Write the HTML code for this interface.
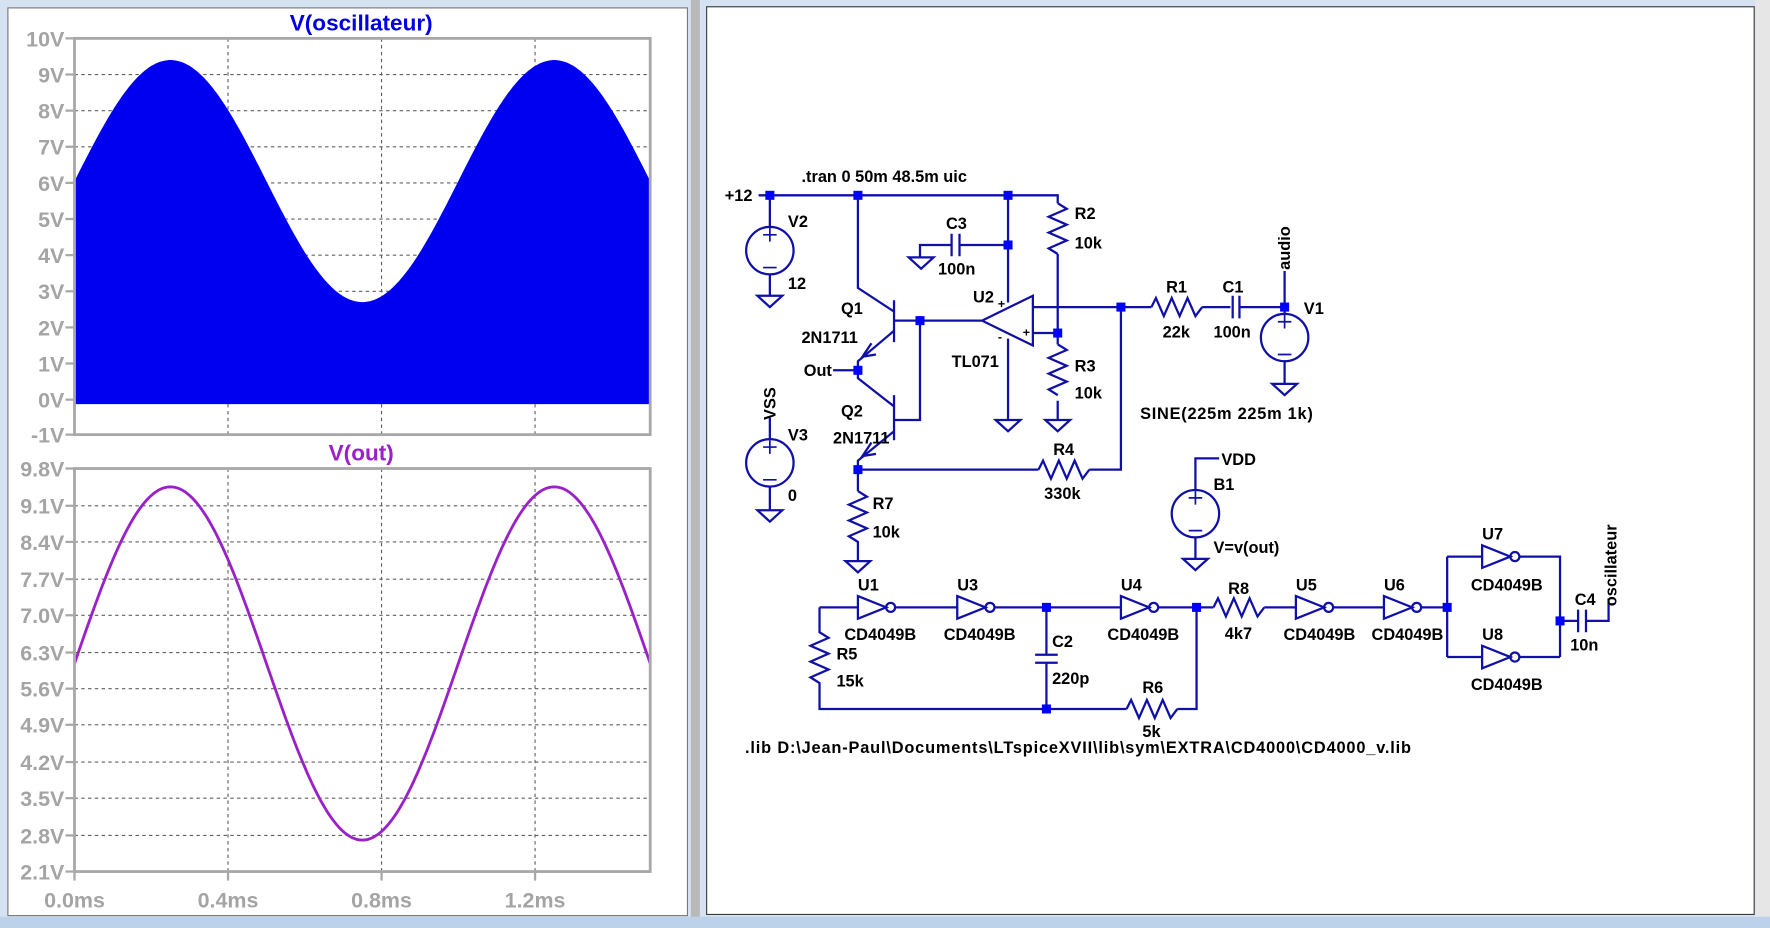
<!DOCTYPE html>
<html><head><meta charset="utf-8"><style>
html,body{margin:0;padding:0;width:1770px;height:928px;overflow:hidden;background:#d5e2f1}
svg{display:block}
.t{font-family:"Liberation Sans",Tahoma,sans-serif;font-weight:bold;font-size:14.5px;fill:#000}
.ax{font-family:"Liberation Sans",Tahoma,sans-serif;font-weight:bold;font-size:19px;fill:#a4a4a4}
.w{stroke:#1010a8;stroke-width:2;fill:none}
.j{fill:#0000ff}
</style></head><body>
<svg width="1770" height="928" viewBox="0 0 1568 822" preserveAspectRatio="none" xmlns="http://www.w3.org/2000/svg">
<rect x="0" y="0" width="1568" height="822" fill="#d5e2f1"/>
<rect x="612" y="0" width="8" height="822" fill="#b9b9b9"/>
<rect x="1555" y="0" width="13" height="822" fill="#e6e6e6"/>
<rect x="7" y="7" width="602" height="804" fill="#fff" stroke="#7a7a7a"/>
<rect x="626" y="6" width="928" height="804" fill="#fff" stroke="#3a3a3a"/>
<rect x="0" y="812" width="1568" height="10" fill="#bcd2ea"/>
<g stroke="#606060" stroke-width="1" stroke-dasharray="3,3">
<line x1="66" y1="66" x2="576" y2="66"/><line x1="66" y1="98" x2="576" y2="98"/><line x1="66" y1="130" x2="576" y2="130"/><line x1="66" y1="162" x2="576" y2="162"/><line x1="66" y1="194" x2="576" y2="194"/><line x1="66" y1="226" x2="576" y2="226"/><line x1="66" y1="258" x2="576" y2="258"/><line x1="66" y1="290" x2="576" y2="290"/><line x1="66" y1="322" x2="576" y2="322"/><line x1="66" y1="354" x2="576" y2="354"/>
<line x1="202" y1="34" x2="202" y2="385"/><line x1="338" y1="34" x2="338" y2="385"/><line x1="474" y1="34" x2="474" y2="385"/>
<line x1="66" y1="448" x2="576" y2="448"/><line x1="66" y1="480" x2="576" y2="480"/><line x1="66" y1="513" x2="576" y2="513"/><line x1="66" y1="545" x2="576" y2="545"/><line x1="66" y1="578" x2="576" y2="578"/><line x1="66" y1="610" x2="576" y2="610"/><line x1="66" y1="642" x2="576" y2="642"/><line x1="66" y1="675" x2="576" y2="675"/><line x1="66" y1="707" x2="576" y2="707"/><line x1="66" y1="740" x2="576" y2="740"/>
<line x1="202" y1="415" x2="202" y2="772"/><line x1="338" y1="415" x2="338" y2="772"/><line x1="474" y1="415" x2="474" y2="772"/>
</g>
<path id="p1" fill="#0000f0" d=""/>
<path id="p2" fill="none" stroke="#9a20c8" stroke-width="2.5" d=""/>
<rect x="66" y="34" width="510" height="351" fill="none" stroke="#a8a8a8" stroke-width="2.5"/>
<rect x="66" y="415" width="510" height="357" fill="none" stroke="#a8a8a8" stroke-width="2.5"/>
<g stroke="#a8a8a8" stroke-width="2">
<line x1="58" y1="34" x2="66" y2="34"/><line x1="58" y1="66" x2="66" y2="66"/><line x1="58" y1="98" x2="66" y2="98"/><line x1="58" y1="130" x2="66" y2="130"/><line x1="58" y1="162" x2="66" y2="162"/><line x1="58" y1="194" x2="66" y2="194"/><line x1="58" y1="226" x2="66" y2="226"/><line x1="58" y1="258" x2="66" y2="258"/><line x1="58" y1="290" x2="66" y2="290"/><line x1="58" y1="322" x2="66" y2="322"/><line x1="58" y1="354" x2="66" y2="354"/><line x1="58" y1="385" x2="66" y2="385"/>
<line x1="58" y1="415" x2="66" y2="415"/><line x1="58" y1="448" x2="66" y2="448"/><line x1="58" y1="480" x2="66" y2="480"/><line x1="58" y1="513" x2="66" y2="513"/><line x1="58" y1="545" x2="66" y2="545"/><line x1="58" y1="578" x2="66" y2="578"/><line x1="58" y1="610" x2="66" y2="610"/><line x1="58" y1="642" x2="66" y2="642"/><line x1="58" y1="675" x2="66" y2="675"/><line x1="58" y1="707" x2="66" y2="707"/><line x1="58" y1="740" x2="66" y2="740"/><line x1="58" y1="772" x2="66" y2="772"/>
<line x1="66" y1="772" x2="66" y2="780"/><line x1="202" y1="772" x2="202" y2="780"/><line x1="338" y1="772" x2="338" y2="780"/><line x1="474" y1="772" x2="474" y2="780"/>
</g>
<g class="ax" text-anchor="end">
<text x="57" y="41">10V</text><text x="57" y="73">9V</text><text x="57" y="105">8V</text><text x="57" y="137">7V</text><text x="57" y="169">6V</text><text x="57" y="201">5V</text><text x="57" y="233">4V</text><text x="57" y="265">3V</text><text x="57" y="297">2V</text><text x="57" y="329">1V</text><text x="57" y="361">0V</text><text x="57" y="392">-1V</text>
<text x="57" y="422">9.8V</text><text x="57" y="455">9.1V</text><text x="57" y="487">8.4V</text><text x="57" y="520">7.7V</text><text x="57" y="552">7.0V</text><text x="57" y="585">6.3V</text><text x="57" y="617">5.6V</text><text x="57" y="649">4.9V</text><text x="57" y="682">4.2V</text><text x="57" y="714">3.5V</text><text x="57" y="747">2.8V</text><text x="57" y="779">2.1V</text>
</g>
<g class="ax" text-anchor="middle">
<text x="66" y="804">0.0ms</text><text x="202" y="804">0.4ms</text><text x="338" y="804">0.8ms</text><text x="474" y="804">1.2ms</text>
</g>
<text x="320" y="27" text-anchor="middle" style="font-family:'Liberation Sans',sans-serif;font-weight:bold;font-size:20px;fill:#0000e0">V(oscillateur)</text>
<text x="320" y="408" text-anchor="middle" style="font-family:'Liberation Sans',sans-serif;font-weight:bold;font-size:20px;fill:#9a20c8">V(out)</text>
<g class="w">
<path d="M672 173H937V180M937 225V295"/>
<path d="M937 180l8 5-16 7 16 7-16 7 16 7-16 7 8 5"/>
<path d="M682 173V201M682 243V262"/>
<circle cx="682" cy="222" r="21"/>
<path d="M760 173V255l32 21M792 266V303M792 284H870M792 293l-32 27V335l32 25M792 350V390M792 372H815V284M792 382l-32 26V435M738 328H760"/>
<path d="M772 304l-8 12 12 -2" /><path d="M772 392l-8 12 12 -2"/>
<path d="M760 416H920M965 416H993V272M915 272H1020M1065 272H1090M1098 272H1138M1138 240V278M1138 320V340"/>
<path d="M920 416l4-8 7 16 7-16 7 16 7-16 7 16 6-8"/>
<path d="M1020 272l4-8 7 16 7-16 7 16 7-16 7 16 6-8"/>
<path d="M1092 262V282M1098 262V282"/>
<circle cx="1138" cy="299" r="21"/>
<path d="M870 284L915 262V306Z"/>
<path d="M915 295H937M893 173V268M893 300V372M893 217H850M843 217H815V228M843 207V227M850 207V227"/>
<path d="M937 295V305M937 355V372M937 305l8 5-16 7 16 7-16 7 16 7-16 7 8 5"/>
<path d="M682 370V389M682 431V452"/>
<circle cx="682" cy="410" r="21"/>
<path d="M760 435l8 5-16 7 16 7-16 7 16 7-16 7 8 5V497"/>
<path d="M1059 434V406H1080M1059 476V495"/>
<circle cx="1059" cy="455" r="21"/>
<path d="M726 538H760M793 538H848M881 538H993M1026 538H1075M1120 538H1148M1181 538H1226M1259 538H1282M1282 493V582M1282 493H1312M1282 582H1312M1346 493H1382V582M1346 582H1382M1382 550H1398M1405 550H1425V530"/>
<path d="M1398 540V560M1405 540V560"/>
<path d="M1075 538l4-8 7 16 7-16 7 16 7-16 7 16 6-8"/>
<path d="M760 528V548L785 538Z"/><circle cx="789" cy="538" r="4"/>
<path d="M848 528V548L873 538Z"/><circle cx="877" cy="538" r="4"/>
<path d="M993 528V548L1018 538Z"/><circle cx="1022" cy="538" r="4"/>
<path d="M1148 528V548L1173 538Z"/><circle cx="1177" cy="538" r="4"/>
<path d="M1226 528V548L1251 538Z"/><circle cx="1255" cy="538" r="4"/>
<path d="M1313 483V503L1338 493Z"/><circle cx="1342" cy="493" r="4"/>
<path d="M1313 572V592L1338 582Z"/><circle cx="1342" cy="582" r="4"/>
<path d="M726 538V560l8 5-16 7 16 7-16 7 16 7-16 7 8 5V628H998M1043 628H1060V538"/>
<path d="M998 628l4-8 7 16 7-16 7 16 7-16 7 16 6-8"/>
<path d="M927 538V580M917 580H937M917 587H937M927 587V628"/>
</g>
<g fill="none" stroke="#1010a8" stroke-width="2">
<path d="M671 262H693L682 272Z"/><path d="M805 228H827L816 238Z"/><path d="M882 372H904L893 382Z"/><path d="M926 372H948L937 382Z"/><path d="M1127 340H1149L1138 350Z"/><path d="M671 452H693L682 462Z"/><path d="M749 497H771L760 507Z"/><path d="M1048 495H1070L1059 505Z"/>
</g>
<g stroke="#1010a8" stroke-width="1.5">
<path d="M676 208h12M682 202v12M676 237h12"/><path d="M1132 285h12M1138 279v12M1132 314h12"/><path d="M676 396h12M682 390v12M676 425h12"/><path d="M1053 441h12M1059 435v12M1053 470h12"/>
</g>
<g class="j">
<rect x="678" y="169" width="8" height="8"/><rect x="756" y="169" width="8" height="8"/><rect x="889" y="169" width="8" height="8"/><rect x="889" y="213" width="8" height="8"/><rect x="811" y="280" width="8" height="8"/><rect x="933" y="291" width="8" height="8"/><rect x="989" y="268" width="8" height="8"/><rect x="1134" y="268" width="8" height="8"/><rect x="756" y="324" width="8" height="8"/><rect x="756" y="412" width="8" height="8"/><rect x="923" y="534" width="8" height="8"/><rect x="1056" y="534" width="8" height="8"/><rect x="1278" y="534" width="8" height="8"/><rect x="1378" y="546" width="8" height="8"/><rect x="923" y="624" width="8" height="8"/>
</g>
<g class="t">
<text x="642" y="178">+12</text><text x="710" y="161">.tran 0 50m 48.5m uic</text>
<text x="698" y="201">V2</text><text x="698" y="256">12</text>
<text x="838" y="203">C3</text><text x="831" y="243">100n</text>
<text x="952" y="194">R2</text><text x="952" y="220">10k</text>
<text x="862" y="268">U2</text><text x="843" y="325">TL071</text>
<text x="884" y="273" style="font-size:11px">+</text><text x="906" y="298" style="font-size:11px">+</text><text x="884" y="302" style="font-size:11px">-</text>
<text x="745" y="278">Q1</text><text x="710" y="304">2N1711</text><text x="712" y="333">Out</text>
<text x="745" y="369">Q2</text><text x="738" y="393">2N1711</text>
<text x="698" y="390">V3</text><text x="698" y="444">0</text>
<text x="952" y="329">R3</text><text x="952" y="353">10k</text>
<text x="933" y="403">R4</text><text x="925" y="442">330k</text>
<text x="1033" y="259">R1</text><text x="1030" y="299">22k</text>
<text x="1083" y="259">C1</text><text x="1075" y="299">100n</text>
<text x="1155" y="278">V1</text>
<text x="1010" y="371" textLength="153">SINE(225m 225m 1k)</text>
<text x="773" y="451">R7</text><text x="773" y="476">10k</text>
<text x="1082" y="412">VDD</text><text x="1075" y="434">B1</text><text x="1075" y="490">V=v(out)</text>
<text x="760" y="523">U1</text><text x="748" y="567">CD4049B</text>
<text x="848" y="523">U3</text><text x="836" y="567">CD4049B</text>
<text x="993" y="523">U4</text><text x="981" y="567">CD4049B</text>
<text x="1088" y="526">R8</text><text x="1085" y="566">4k7</text>
<text x="1148" y="523">U5</text><text x="1137" y="567">CD4049B</text>
<text x="1226" y="523">U6</text><text x="1215" y="567">CD4049B</text>
<text x="1313" y="478">U7</text><text x="1303" y="523">CD4049B</text>
<text x="1313" y="567">U8</text><text x="1303" y="611">CD4049B</text>
<text x="1395" y="536">C4</text><text x="1391" y="576">10n</text>
<text x="932" y="573">C2</text><text x="932" y="606">220p</text>
<text x="741" y="584">R5</text><text x="741" y="608">15k</text>
<text x="1012" y="614">R6</text><text x="1012" y="653">5k</text>
<text x="660" y="667" textLength="590">.lib D:\Jean-Paul\Documents\LTspiceXVII\lib\sym\EXTRA\CD4000\CD4000_v.lib</text>
<text transform="translate(1143,239) rotate(-90)">audio</text>
<text transform="translate(687,372) rotate(-90)">VSS</text>
<text transform="translate(1432,537) rotate(-90)">oscillateur</text>
</g>
</svg>
<script>
(function(){
var a="M66 358",b="";
for(var i=0;i<=510;i+=2){var t=i/510*1.5;var v=6.05+3.35*Math.sin(2*Math.PI*t);var y=354-v*32;a+=" L"+(66+i)+" "+y.toFixed(1);}
a+=" L576 358 Z";
for(var i=0;i<=510;i+=2){var t=i/510*1.5;var v=6.075+3.375*Math.sin(2*Math.PI*t);var y=415+(9.8-v)/0.7*32.45;b+=(i?" L":"M")+(66+i)+" "+y.toFixed(1);}
document.getElementById("p1").setAttribute("d",a);
document.getElementById("p2").setAttribute("d",b);
})();
</script>
</body></html>
